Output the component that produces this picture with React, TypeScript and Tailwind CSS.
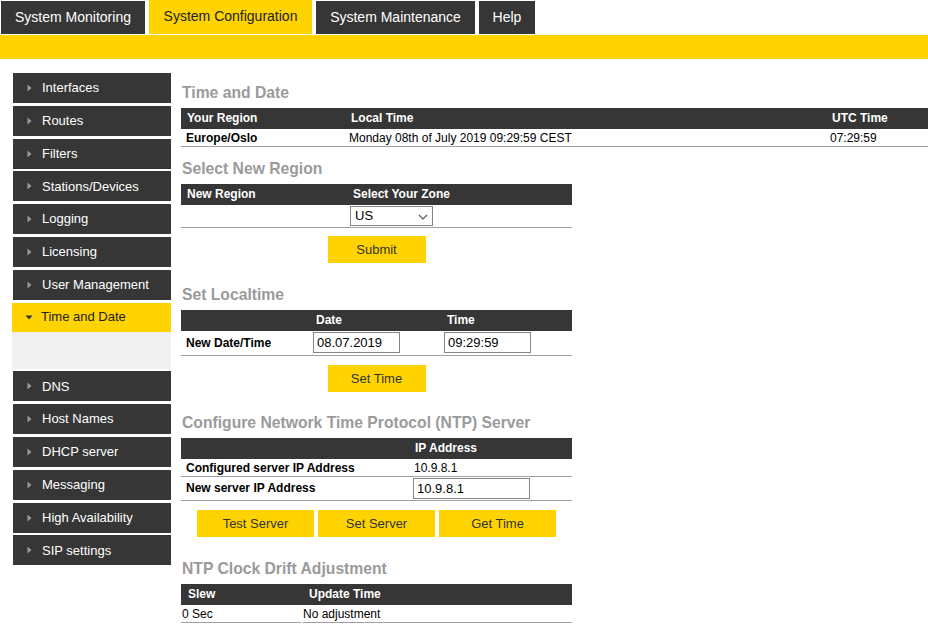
import React from "react";

const sideTop = [
  "Interfaces",
  "Routes",
  "Filters",
  "Stations/Devices",
  "Logging",
  "Licensing",
  "User Management",
];
const sideBottom = ["DNS", "Host Names", "DHCP server", "Messaging", "High Availability", "SIP settings"];

function RightTri() {
  return (
    <svg width="5" height="8" viewBox="0 0 5 8" className="shrink-0">
      <path d="M0.5 0.5 L4.5 4 L0.5 7.5 Z" fill="#9a9a9a" />
    </svg>
  );
}

function DownTri() {
  return (
    <svg width="8" height="5" viewBox="0 0 8 5" className="shrink-0">
      <path d="M0.5 0.5 L7.5 0.5 L4 4.5 Z" fill="#333333" />
    </svg>
  );
}

function SideItem({ label }: { label: string }) {
  return (
    <div className="flex h-[30px] items-center bg-[#363636] pl-[14px] text-[13px] text-white">
      <RightTri />
      <span className="ml-[10px]">{label}</span>
    </div>
  );
}

function Heading({ children, mt }: { children: React.ReactNode; mt?: string }) {
  return (
    <div
      className={
        (mt ?? "") +
        " mb-[5px] pl-px pt-[1px] text-[15.7px] font-bold leading-[20px] text-[#9a9a9a]"
      }
    >
      {children}
    </div>
  );
}

function HeadRow({ children }: { children: React.ReactNode }) {
  return (
    <div className="flex h-[21px] items-center bg-[#363636] pb-[2px] font-bold text-white">{children}</div>
  );
}

function Btn({ label, w }: { label: string; w: string }) {
  return (
    <div className={"flex h-[27px] items-center justify-center bg-[#ffd300] text-[13px] text-[#333333] " + w}>
      {label}
    </div>
  );
}

function Input({ value, w }: { value: string; w: string }) {
  return (
    <div className={"flex h-[21px] items-center border border-[#858585] bg-white pl-[3px] text-[13px] " + w}>
      {value}
    </div>
  );
}

export default function App() {
  return (
    <div className="min-h-[627px] w-[928px] overflow-hidden bg-white font-['Liberation_Sans',Arial,sans-serif] text-black">
      {/* Top tabs */}
      <div className="flex h-[34px] items-end gap-[4px] pl-px">
        <div className="flex h-[33px] w-[144px] items-center justify-center bg-[#363636] text-[14px] text-white">
          System Monitoring
        </div>
        <div className="flex h-[34px] w-[163px] items-center justify-center bg-[#ffd300] pb-[1px] text-[14px] text-[#222222]">
          System Configuration
        </div>
        <div className="flex h-[33px] w-[159px] items-center justify-center bg-[#363636] text-[14px] text-white">
          System Maintenance
        </div>
        <div className="flex h-[33px] w-[56px] items-center justify-center bg-[#363636] text-[14px] text-white">
          Help
        </div>
      </div>
      <div className="mt-[1px] h-[24px] bg-[#ffd300]" />

      <div className="flex">
        {/* Sidebar */}
        <div className="ml-[13px] mt-[14px] flex w-[158px] shrink-0 flex-col gap-[2.8px]">
          {sideTop.map((l) => (
            <SideItem key={l} label={l} />
          ))}
          <div className="-ml-px w-[159px]">
            <div className="flex h-[29px] items-center bg-[#ffd300] pl-[13px] text-[13px] text-[#222222]">
              <DownTri />
              <span className="ml-[8px]">Time and Date</span>
            </div>
            <div className="h-[37px] bg-[#f0f0f0]" />
          </div>
          {sideBottom.map((l) => (
            <SideItem key={l} label={l} />
          ))}
        </div>

        {/* Content */}
        <div className="ml-[10px] flex-1 pt-[23px] text-[12px]">
          <Heading>Time and Date</Heading>
          <HeadRow>
            <div className="w-[165px] pl-[6px]">Your Region</div>
            <div className="w-[481px] pl-[5px]">Local Time</div>
            <div className="flex-1 pl-[5px]">UTC Time</div>
          </HeadRow>
          <div className="flex h-[18px] items-center border-b border-[#a0a0a0]">
            <div className="w-[165px] pl-[5px] font-bold">Europe/Oslo</div>
            <div className="w-[481px] pl-[3px]">Monday 08th of July 2019 09:29:59 CEST</div>
            <div className="flex-1 pl-[3px]">07:29:59</div>
          </div>

          <div className="w-[391px]">
            <Heading mt="mt-[11px]">Select New Region</Heading>
            <HeadRow>
              <div className="w-[167px] pl-[6px]">New Region</div>
              <div className="flex-1 pl-[5px]">Select Your Zone</div>
            </HeadRow>
            <div className="flex h-[23px] items-start border-b border-[#a0a0a0] pt-px">
              <div className="w-[167px]" />
              <div className="relative ml-[2px] flex h-[20px] w-[83px] items-center border border-[#858585] bg-white pl-[4px] text-[13px]">
                US
                <svg
                  width="10"
                  height="6"
                  viewBox="0 0 10 6"
                  className="absolute right-[4px] top-[7px]"
                >
                  <path d="M1 1 L5 5 L9 1" fill="none" stroke="#555555" strokeWidth="1.1" />
                </svg>
              </div>
            </div>
            <div className="mt-[8px] flex justify-center">
              <Btn label="Submit" w="w-[98px]" />
            </div>

            <Heading mt="mt-[21px]">Set Localtime</Heading>
            <HeadRow>
              <div className="w-[130px]" />
              <div className="w-[131px] pl-[5px]">Date</div>
              <div className="flex-1 pl-[5px]">Time</div>
            </HeadRow>
            <div className="flex h-[25px] items-start border-b border-[#a0a0a0] pt-px">
              <div className="flex h-[21px] w-[130px] items-center pl-[5px] font-bold">New Date/Time</div>
              <div className="w-[131px] pl-[2px]">
                <Input value="08.07.2019" w="w-[87px]" />
              </div>
              <div className="flex-1 pl-[2px]">
                <Input value="09:29:59" w="w-[87px]" />
              </div>
            </div>
            <div className="mt-[9px] flex justify-center">
              <Btn label="Set Time" w="w-[98px]" />
            </div>

            <Heading mt="mt-[20px]">Configure Network Time Protocol (NTP) Server</Heading>
            <HeadRow>
              <div className="w-[230px]" />
              <div className="flex-1 pl-[4px]">IP Address</div>
            </HeadRow>
            <div className="flex h-[18px] items-center border-b border-[#a0a0a0]">
              <div className="w-[230px] pl-[5px] font-bold">Configured server IP Address</div>
              <div className="flex-1 pl-[3px]">10.9.8.1</div>
            </div>
            <div className="flex h-[24px] items-start border-b border-[#a0a0a0] pt-px">
              <div className="flex h-[20px] w-[230px] items-center pl-[5px] font-bold">New server IP Address</div>
              <div className="flex-1 pl-[2px]">
                <Input value="10.9.8.1" w="w-[117px]" />
              </div>
            </div>
            <div className="mt-[9px] flex justify-center gap-[4px]">
              <Btn label="Test Server" w="w-[117px]" />
              <Btn label="Set Server" w="w-[117px]" />
              <Btn label="Get Time" w="w-[117px]" />
            </div>

            <Heading mt="mt-[21px]">NTP Clock Drift Adjustment</Heading>
            <HeadRow>
              <div className="w-[122px] pl-[7px]">Slew</div>
              <div className="flex-1 pl-[6px]">Update Time</div>
            </HeadRow>
            <div className="flex h-[18px] gap-[2px]">
              <div className="flex w-[120px] items-center border-b border-[#a0a0a0] pl-px">0 Sec</div>
              <div className="flex flex-1 items-center border-b border-[#a0a0a0]">No adjustment</div>
            </div>
          </div>
        </div>
      </div>
    </div>
  );
}
